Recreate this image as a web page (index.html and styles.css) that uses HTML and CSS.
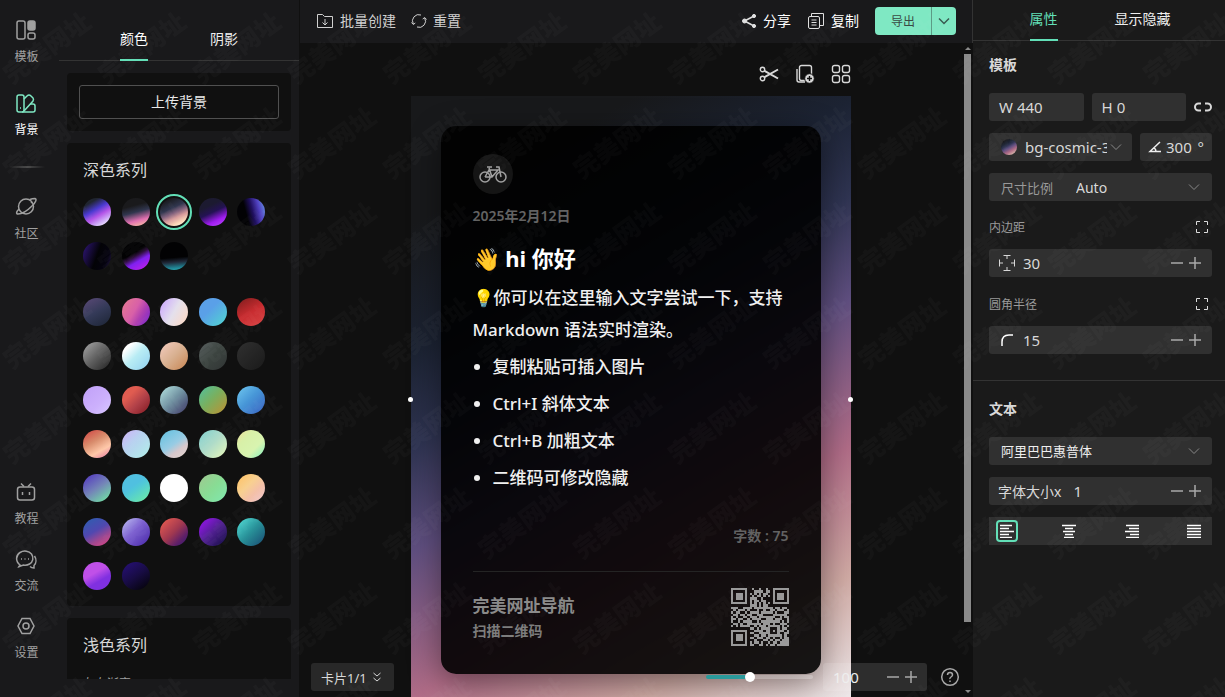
FILE: index.html
```html
<!doctype html>
<html lang="zh-CN">
<head>
	<meta charset="utf-8">
	<title>卡片编辑</title>
	<meta name="viewport" content="width=device-width, initial-scale=1">
	<link rel="stylesheet" href="styles.css">
</head>
<body>
	<div class="app">
		<nav class="nav">
			<a href="#" class="nav-item">
				<svg viewBox="0 0 24 24"><rect x="3" y="3" width="8" height="18" rx="2"/><rect x="14" y="3" width="7" height="9" rx="2" fill="currentColor"/><rect x="14" y="15" width="7" height="6" rx="2"/></svg>
				<span>模板</span>
			</a>
			<a href="#" class="nav-item active">
				<svg viewBox="0 0 24 24"><rect x="3" y="4" width="7" height="17" rx="2"/><path d="M10 8l3-3q2-2 4 0l2 2q1 1 0 3L10 20"/><path d="M16 13h3q2 0 2 2v4q0 2-2 2H8"/><path d="M6 17h1"/></svg>
				<span>背景</span>
			</a>
			<hr class="nav-line">
			<a href="#" class="nav-item">
				<svg viewBox="0 0 24 24"><circle cx="12" cy="11.500" r="7.500"/><path d="M5 14c-3 3-3 5-1 5 4 0 10-4 14-8 4-4 5-7 3-7.500-1 0-3 0-5 1"/><path d="M17 7l1 1"/></svg>
				<span>社区</span>
			</a>
			<div class="nav-bottom">
				<a href="#" class="nav-item">
					<svg viewBox="0 0 24 24"><rect x="3.500" y="7" width="17" height="13" rx="2.500"/><path d="M7 3.500l3 3M17 3.500l-3 3M8.500 12v3M15.500 12v3"/></svg>
					<span>教程</span>
				</a>
				<a href="#" class="nav-item">
					<svg viewBox="0 0 24 24"><path d="M6 18c-5-4-4-10 0-12.500 4-2.500 9-1.500 11.500 1.500 2.500 3.500 1.500 8-2 10-2 1.200-4 1.500-6 1L5 19.500z"/><path d="M20.500 9c2 3 2 7-.5 9.500v2.500c-2 0-3-.5-4-1.500"/><path d="M7 12h1M10.500 12h1M14 12h1"/></svg>
					<span>交流</span>
				</a>
				<a href="#" class="nav-item">
					<svg viewBox="0 0 24 24"><path d="M8 4.500h8l4 7.500-4 7.500H8L4 12z"/><circle cx="12" cy="12" r="3"/></svg>
					<span>设置</span>
				</a>
			</div>
		</nav>

		<aside class="side">
			<div class="tabs side-tabs">
				<button class="tab active">颜色</button>
				<button class="tab">阴影</button>
			</div>
			<div class="side-scroll">
				<section class="box upload-box">
					<button class="upload">上传背景</button>
				</section>
				<section class="box">
					<h2>深色系列</h2>
					<div class="swatches">
						<button class="sw c1" aria-label="cosmic 1"></button>
						<button class="sw c2" aria-label="cosmic 2"></button>
						<button class="sw c3 selected" aria-label="cosmic 3"></button>
						<button class="sw c4" aria-label="cosmic 4"></button>
						<button class="sw c5" aria-label="cosmic 5"></button>
						<button class="sw c6" aria-label="cosmic 6"></button>
						<button class="sw c7" aria-label="cosmic 7"></button>
						<button class="sw c8" aria-label="cosmic 8"></button>
					</div>
					<div class="swatches">
						<button class="sw g1" aria-label="渐变 1"></button>
						<button class="sw g2" aria-label="渐变 2"></button>
						<button class="sw g3" aria-label="渐变 3"></button>
						<button class="sw g4" aria-label="渐变 4"></button>
						<button class="sw g5" aria-label="渐变 5"></button>
						<button class="sw g6" aria-label="渐变 6"></button>
						<button class="sw g7" aria-label="渐变 7"></button>
						<button class="sw g8" aria-label="渐变 8"></button>
						<button class="sw g9" aria-label="渐变 9"></button>
						<button class="sw g10" aria-label="渐变 10"></button>
						<button class="sw g11" aria-label="渐变 11"></button>
						<button class="sw g12" aria-label="渐变 12"></button>
						<button class="sw g13" aria-label="渐变 13"></button>
						<button class="sw g14" aria-label="渐变 14"></button>
						<button class="sw g15" aria-label="渐变 15"></button>
						<button class="sw g16" aria-label="渐变 16"></button>
						<button class="sw g17" aria-label="渐变 17"></button>
						<button class="sw g18" aria-label="渐变 18"></button>
						<button class="sw g19" aria-label="渐变 19"></button>
						<button class="sw g20" aria-label="渐变 20"></button>
						<button class="sw g21" aria-label="渐变 21"></button>
						<button class="sw g22" aria-label="渐变 22"></button>
						<button class="sw g23" aria-label="渐变 23"></button>
						<button class="sw g24" aria-label="渐变 24"></button>
						<button class="sw g25" aria-label="渐变 25"></button>
						<button class="sw g26" aria-label="渐变 26"></button>
						<button class="sw g27" aria-label="渐变 27"></button>
						<button class="sw g28" aria-label="渐变 28"></button>
						<button class="sw g29" aria-label="渐变 29"></button>
						<button class="sw g30" aria-label="渐变 30"></button>
						<button class="sw g31" aria-label="渐变 31"></button>
						<button class="sw g32" aria-label="渐变 32"></button>
					</div>
				</section>
				<section class="box">
					<h2>浅色系列</h2>
					<p class="sub">左右渐变</p>
				</section>
			</div>
		</aside>

		<main class="main">
			<header class="topbar">
				<button class="act dim">
					<svg class="i18" viewBox="0 0 18 18"><path d="M1.500 15.500v-13h5l2 2h8v11z"/><path d="M9 7v6M6.500 10.500L9 13l2.500-2.500"/></svg>
					批量创建
				</button>
				<button class="act dim">
					<svg class="i16" viewBox="0 0 16 16"><path d="M2.300 11A6.300 6.300 0 0 1 10 2M13.700 5A6.300 6.300 0 0 1 6 14M.5 9.500l1.800 2 2-1.500M15.500 6.500l-1.800-2-2 1.500"/></svg>
					重置
				</button>
				<div class="act-right">
					<button class="act">
						<svg class="i16" viewBox="0 0 16 16"><path d="M13 3L3.500 8l9.500 5" stroke-width="1.500"/><g fill="currentColor"><circle cx="13" cy="3" r="1.600"/><circle cx="3.500" cy="8" r="2"/><circle cx="13" cy="13" r="1.600"/></g></svg>
						分享
					</button>
					<button class="act">
						<svg class="i18" viewBox="0 0 18 18"><rect x="1.500" y="4.500" width="11" height="12" rx="1.500"/><path d="M4.500 4V1.500h12v12H13M4.500 8h5M4.500 10.500h5M4.500 13h5"/></svg>
						复制
					</button>
					<div class="export">
						<button class="export-main">导出</button>
						<button class="export-more" aria-label="更多"><svg class="i12" viewBox="0 0 12 12"><path d="M1 3.500l5 5 5-5" stroke-width="1.500"/></svg></button>
					</div>
				</div>
			</header>

			<div class="canvas">
				<div class="tools">
					<button aria-label="剪切"><svg viewBox="0 0 20 20"><circle cx="3.500" cy="5.500" r="2.200"/><circle cx="3.500" cy="14.500" r="2.200"/><path d="M5.500 6.800L19 14.500M5.500 13.200L19 5.500" stroke-width="2"/></svg></button>
					<button aria-label="添加"><svg viewBox="0 0 20 20"><rect x="4.500" y="1.500" width="12" height="15" rx="2"/><path d="M2 5v11q0 2 2 2h6"/><circle cx="14.500" cy="14.500" r="4.800" fill="#d8d8d8" stroke="#101010" stroke-width="1"/><path d="M14.500 12v5M12 14.500h5" stroke="#101010"/></svg></button>
					<button aria-label="布局"><svg viewBox="0 0 20 20"><rect x="1.500" y="1.500" width="7" height="7" rx="2"/><rect x="11.500" y="1.500" width="7" height="7" rx="2"/><rect x="1.500" y="11.500" width="7" height="7" rx="2"/><rect x="11.500" y="11.500" width="7" height="7" rx="2"/></svg></button>
				</div>

				<div class="frame">
					<i class="handle handle-l"></i>
					<i class="handle handle-r"></i>
					<article class="card">
						<div class="avatar">
							<svg viewBox="0 0 28 18"><circle cx="6" cy="12" r="5"/><circle cx="22" cy="12" r="5"/><path d="M6 12l4-7h9l-6 7H6M8 2h5M10 3l3 9M17 2h3l2 10"/></svg>
						</div>
						<p class="date">2025年2月12日</p>
						<h1>👋 hi 你好</h1>
						<p class="text">💡你可以在这里输入文字尝试一下，支持 Markdown 语法实时渲染。</p>
						<ul>
							<li>复制粘贴可插入图片</li>
							<li>Ctrl+I 斜体文本</li>
							<li>Ctrl+B 加粗文本</li>
							<li>二维码可修改隐藏</li>
						</ul>
						<p class="count">字数 : 75</p>
						<footer class="card-foot">
							<div>
								<p class="site">完美网址导航</p>
								<p class="scan">扫描二维码</p>
							</div>
							<svg class="qr" viewBox="0 0 25 25" shape-rendering="crispEdges"><path id="qr-path"/></svg>
						</footer>
					</article>
				</div>

				<div class="scrollbar"><i class="up"></i><i class="thumb"></i><i class="down"></i></div>

				<button class="pages">卡片1/1 <svg class="i10" viewBox="0 0 10 10"><path d="M1.500 1L5 4l3.500-3M1.500 6L5 9l3.500-3"/></svg></button>
				<div class="zoombar">
					<input type="range" class="zoom" min="0" max="100" value="40" aria-label="缩放">
					<div class="field zoom-field">
						<input type="text" value="100" aria-label="缩放比例">
						<button class="step" aria-label="缩小"><svg viewBox="0 0 12 12"><path d="M0 6h12"/></svg></button>
						<button class="step" aria-label="放大"><svg viewBox="0 0 12 12"><path d="M0 6h12M6 0v12"/></svg></button>
					</div>
					<button class="help" aria-label="帮助"><svg viewBox="0 0 20 20"><circle cx="10" cy="10" r="8.300"/><path d="M7.500 8q0-2.500 2.500-2.500T12.500 8q0 1-1.500 2t-1 2M10 13.500v1.500"/></svg></button>
				</div>
			</div>
		</main>

		<aside class="props">
			<div class="tabs props-tabs">
				<button class="tab active">属性</button>
				<button class="tab">显示隐藏</button>
			</div>
			<section class="group">
				<h3>模板</h3>
				<div class="row">
					<label class="field size">W <input type="text" value="440"></label>
					<label class="field size">H <input type="text" value="0"></label>
					<button class="link" aria-label="锁定比例"><svg viewBox="0 0 18 10"><path d="M7 1.500H4.500a3.500 3.500 0 0 0 0 7H7M11 1.500h2.500a3.500 3.500 0 0 1 0 7H11"/></svg></button>
				</div>
				<div class="row">
					<div class="field bg-field">
						<i class="dot c3"></i>
						<select aria-label="背景"><option>bg-cosmic-3</option></select>
						<svg class="i12 chev" viewBox="0 0 12 12"><path d="M1 3.500l5 5 5-5"/></svg>
					</div>
					<div class="field angle">
						<svg viewBox="0 0 14 14"><path d="M12 2L2 11.500h11M6 8q2 1 2 3.500" stroke-width="1.500"/></svg>
						<input type="text" value="300" aria-label="角度">
						<span>°</span>
					</div>
				</div>
				<div class="field ratio">
					<label for="ratio">尺寸比例</label>
					<select id="ratio"><option>Auto</option></select>
					<svg class="i12 chev" viewBox="0 0 12 12"><path d="M1 3.500l5 5 5-5"/></svg>
				</div>
				<div class="label">
					<label for="pad">内边距</label>
					<button class="expand" aria-label="展开"><svg viewBox="0 0 12 12"><path d="M.5 4V.5H4M8 .5h3.500V4M11.500 8v3.500H8M4 11.500H.5V8"/></svg></button>
				</div>
				<div class="field stepper">
					<svg class="i18" viewBox="0 0 18 18"><path d="M5.500 1.500h7M9 2v3M5.500 16.500h7M9 16v-3M1.500 5.500v7M2 9h3M16.500 5.500v7M16 9h-3"/></svg>
					<input type="text" id="pad" value="30">
					<button class="step" aria-label="减"><svg viewBox="0 0 12 12"><path d="M0 6h12"/></svg></button>
					<button class="step" aria-label="加"><svg viewBox="0 0 12 12"><path d="M0 6h12M6 0v12"/></svg></button>
				</div>
				<div class="label">
					<label for="radius">圆角半径</label>
					<button class="expand" aria-label="展开"><svg viewBox="0 0 12 12"><path d="M.5 4V.5H4M8 .5h3.500V4M11.500 8v3.500H8M4 11.500H.5V8"/></svg></button>
				</div>
				<div class="field stepper">
					<svg class="i18" viewBox="0 0 18 18"><path d="M4 15v-4q0-7 7-7h4" stroke="#fff" stroke-width="1.500"/></svg>
					<input type="text" id="radius" value="15">
					<button class="step" aria-label="减"><svg viewBox="0 0 12 12"><path d="M0 6h12"/></svg></button>
					<button class="step" aria-label="加"><svg viewBox="0 0 12 12"><path d="M0 6h12M6 0v12"/></svg></button>
				</div>
			</section>
			<section class="group group-text">
				<h3>文本</h3>
				<div class="field font-field">
					<select aria-label="字体"><option>阿里巴巴惠普体</option></select>
					<svg class="i12 chev" viewBox="0 0 12 12"><path d="M1 3.500l5 5 5-5"/></svg>
				</div>
				<div class="field stepper">
					<label for="fs">字体大小x</label>
					<input type="text" id="fs" value="1">
					<button class="step" aria-label="减"><svg viewBox="0 0 12 12"><path d="M0 6h12"/></svg></button>
					<button class="step" aria-label="加"><svg viewBox="0 0 12 12"><path d="M0 6h12M6 0v12"/></svg></button>
				</div>
				<div class="aligns">
					<button class="active" aria-label="左对齐"><svg viewBox="0 0 14 14"><path d="M0 1.500h12M0 4.500h9M0 7.500h14M0 10.500h9M0 13.500h12"/></svg></button>
					<button aria-label="居中"><svg viewBox="0 0 14 14"><path d="M0 1.500h14M3 4.500h8M1 7.500h12M3 10.500h8M2 13.500h10"/></svg></button>
					<button aria-label="右对齐"><svg viewBox="0 0 14 14"><path d="M1 1.500h13M4 4.500h10M0 7.500h14M5 10.500h9M1 13.500h13"/></svg></button>
					<button aria-label="两端对齐"><svg viewBox="0 0 14 14"><path d="M0 1.500h14M0 4.500h14M0 7.500h14M0 10.500h14M0 13.500h14"/></svg></button>
				</div>
			</section>
		</aside>
	</div>

	<svg class="mark" aria-hidden="true">
		<defs>
			<pattern id="mark" width="95" height="95" patternUnits="userSpaceOnUse">
				<text x="47" y="57" text-anchor="middle" transform="rotate(-36 47 48)">完美网址</text>
			</pattern>
		</defs>
		<rect width="100%" height="100%" fill="url(#mark)"/>
	</svg>

	<script>
		// modules of the code, one string per row
		var rows = [
			"1111111001001001001111111",
			"1000001000111101101000001",
			"1011101010101011001011101",
			"1011101001011010101011101",
			"1011101011100100001011101",
			"1000001010110110001000001",
			"1111111010101010101111111",
			"0000000011101011000000000",
			"1110011110111111110110110",
			"0101110100010010011011101",
			"1011001011110111110100011",
			"0110110110011100001111110",
			"1010011011101111111001011",
			"1101100101111001110111001",
			"1001011110010111111110101",
			"0110100111111011101001110",
			"1010111100101110111110101",
			"0000000011010111100010110",
			"1111111000111101101011101",
			"1000001011001111100010011",
			"1011101000110110111111010",
			"1011101011011101101001011",
			"1011101000100011010110111",
			"1000001010110100101101111",
			"1111111011001101011011111"
		];
		var d = "";
		for (var y = 0; y < rows.length; y++) {
			for (var x = 0; x < rows[y].length; x++) {
				if (rows[y].charAt(x) == "1") {
					d += "M" + x + " " + y + "h1v1h-1z";
				}
			}
		}
		document.getElementById("qr-path").setAttribute("d", d);
	</script>
</body>
</html>
```
FILE: styles.css
```css
* {
	box-sizing: border-box;
	margin: 0;
	padding: 0;
}

body {
	background: #101010;
	color: #d8d8d8;
	font-family: "Noto Sans", "Noto Sans CJK SC", sans-serif;
	font-size: 14px;
	overflow: hidden;
}

button, input, select {
	font: inherit;
	color: inherit;
	background: none;
	border: 0;
	outline: 0;
}

a {
	color: inherit;
	text-decoration: none;
}

svg {
	display: block;
	flex: none;
	fill: none;
	stroke: currentColor;
}

.i10 { width: 10px; height: 10px; }
.i12 { width: 12px; height: 12px; }
.i16 { width: 16px; height: 16px; }
.i18 { width: 18px; height: 18px; }

.app {
	display: flex;
	height: 100vh;
}

/* left navigation */
.nav {
	width: 59px;
	padding: 18px 6px 36px 0;
	background: #19191b;
	display: flex;
	flex-direction: column;
	align-items: center;
	flex: none;
}

.nav-item {
	display: flex;
	flex-direction: column;
	align-items: center;
	gap: 7px;
	color: #a0a0a0;
	font-size: 12px;
	line-height: 16px;
	margin-bottom: 26px;
}

.nav-item svg {
	width: 24px;
	height: 24px;
	stroke-width: 1.5;
}

.nav-item.active { color: #fff; }
.nav-item.active svg { color: #7fe8c3; }

.nav-line {
	width: 36px;
	height: 2px;
	border: 0;
	margin: 2px 0 27px;
	background: linear-gradient(90deg, transparent, #4a4a4a, transparent);
}

.nav-bottom {
	margin-top: auto;
	display: flex;
	flex-direction: column;
	gap: 20px;
}

.nav-bottom .nav-item { margin: 0; }

/* background panel */
.side {
	width: 240px;
	background: #19191b;
	display: flex;
	flex-direction: column;
	padding-bottom: 18px;
	flex: none;
}

.tabs {
	display: flex;
	justify-content: center;
	border-bottom: 1px solid #333;
	flex: none;
}

.tab {
	line-height: 20px;
	border-bottom: 2px solid transparent;
	margin-bottom: -1px;
	color: #eee;
}

.tab.active { border-color: #62dfb7; }

.side-tabs {
	height: 61px;
	gap: 62px;
	padding-top: 18px;
}

.side-tabs .active { color: #fff; }

.side-scroll {
	flex: 1;
	min-height: 0;
	overflow: hidden;
	padding: 12px 8px 0;
}

.box {
	background: #101010;
	border-radius: 4px;
	padding: 15px 26px 16px 16px;
	margin-bottom: 12px;
}

.upload-box { padding: 12px; }

.upload {
	width: 100%;
	height: 34px;
	padding-bottom: 2px;
	border: 1px solid #505050;
	border-radius: 3px;
	color: #e8e8e8;
}

.box h2 {
	font-size: 16px;
	font-weight: 400;
	line-height: 24px;
}

.sub {
	font-size: 12px;
	line-height: 18px;
	margin-top: 18px;
	color: #a0a0a0;
}

.swatches {
	display: grid;
	grid-template-columns: repeat(5, 28px);
	justify-content: space-between;
	row-gap: 16px;
	margin-top: 16px;
}

.swatches + .swatches { margin-top: 28px; }

.sw {
	width: 28px;
	height: 28px;
	border-radius: 50%;
}

.sw.selected {
	outline: 2px solid #62dfb7;
	outline-offset: 2px;
}

.c1 { background: linear-gradient(150deg, #202530 20%, #4a3ad0 42%, #b455e8 60%, #d0b0f8 78%, #f0e8ff 90%); }
.c2 { background: linear-gradient(165deg, #1a1a1c 30%, #30364e 50%, #e070b0 75%, #ffd0a0); }
.c3 { background: linear-gradient(150deg, #18191b 15%, #1c2333 30%, #2f3452 41%, #604f80 53%, #b06c87 70%, #d0aaa4 85%, #efebed); }
.c4 { background: linear-gradient(155deg, #1c1a30 30%, #241254 50%, #a01cf0 75%, #c050ff); }
.c5 { background: linear-gradient(75deg, #020204 35%, #201060 55%, #5040c0 75%, #6aa0e8); }
.c6 { background: linear-gradient(110deg, #2c1470 5%, #030306 50%, #050310 80%, #201048); }
.c7 { background: linear-gradient(150deg, #020203 40%, #301040 50%, #8020f0 65%, #d020e8); }
.c8 { background: linear-gradient(175deg, #020203 55%, #202838 70%, #208898 90%, #30b0b0); }
.sw.c3 { background: linear-gradient(155deg, #18191b 12%, #30364e 38%, #80607c 52%, #d89c9c 66%, #fcd8b8 82%, #fff); }
.g1 { background: linear-gradient(150deg, #5c4a78, #343a58 50%, #1c2434); }
.g2 { background: linear-gradient(120deg, #e87c90, #d860a8 45%, #b040b0 65%, #7020d0); }
.g3 { background: linear-gradient(120deg, #c8a0ff, #e4e0ec 50%, #ffd8c0); }
.g4 { background: linear-gradient(135deg, #5aa0e8 40%, #50d8d0); }
.g5 { background: linear-gradient(150deg, #7c1c1c, #c82c30 50%, #d84444); }
.g6 { background: linear-gradient(135deg, #aaa, #606060 50%, #202020); }
.g7 { background: linear-gradient(135deg, #fff 20%, #b8ecf4 50%, #90d0f0); }
.g8 { background: linear-gradient(135deg, #f4ccc0, #d8b090 50%, #c88450); }
.g9 { background: linear-gradient(135deg, #555c5c, #3c4440 50%, #303434); }
.g10 { background: linear-gradient(135deg, #303030, #1a1a1a); }
.g11 { background: linear-gradient(135deg, #c0a0f8, #ccb0fc 60%, #d8c8ff); }
.g12 { background: linear-gradient(135deg, #e05c50 30%, #b04048 60%, #801820); }
.g13 { background: linear-gradient(135deg, #b8e8e4, #7090a0 50%, #383060); }
.g14 { background: linear-gradient(135deg, #50c0a0, #78b060 45%, #c09030); }
.g15 { background: linear-gradient(135deg, #70c8f0, #4898d8 45%, #3860c0); }
.g16 { background: linear-gradient(150deg, #d04040, #d88c6c 40%, #ffc8a8 70%, #e070a0); }
.g17 { background: linear-gradient(135deg, #d0b0f8, #b8d0f0 40%, #b0f0e8); }
.g18 { background: linear-gradient(145deg, #60c0e0, #98cce4 50%, #d8c8cc 70%, #e4d8d0); }
.g19 { background: linear-gradient(135deg, #80d0d0, #b0dcc8 50%, #e8f8b8); }
.g20 { background: linear-gradient(135deg, #f0e098, #d8f0a8 30%, #d8f4b0 65%, #80f0c0); }
.g21 { background: linear-gradient(145deg, #5030c0, #7484b8 50%, #70f0a0); }
.g22 { background: linear-gradient(145deg, #50c0e0 40%, #50c8d8 50%, #70f0a0); }
.g23 { background: #fff; }
.g24 { background: linear-gradient(135deg, #a0c890, #88dc94 50%, #80e8b0); }
.g25 { background: linear-gradient(135deg, #ffc060, #f8d090 40%, #f4c0a8 65%, #f0c8d0); }
.g26 { background: linear-gradient(150deg, #2a60b0, #5048b0 45%, #a04890 70%, #e04080); }
.g27 { background: linear-gradient(135deg, #a8a0e8 15%, #7c60d0 45%, #4828a8); }
.g28 { background: linear-gradient(135deg, #f06050, #a03850 50%, #602068 75%, #301870); }
.g29 { background: linear-gradient(135deg, #8018d0 20%, #502090 50%, #100c40); }
.g30 { background: linear-gradient(135deg, #50e0d8, #289098 50%, #184870); }
.g31 { background: linear-gradient(150deg, #c050e8 40%, #8030e0 65%); }
.g32 { background: linear-gradient(145deg, #28107c, #180c44 50%, #040308 95%); }

/* top bar */
.main {
	flex: 1;
	min-width: 0;
	display: flex;
	flex-direction: column;
	border-left: 1px solid #101010;
}

.topbar {
	height: 43px;
	padding: 0 16px 1px;
	background: #19191b;
	border-right: 1px solid #333;
	display: flex;
	align-items: center;
	gap: 15px;
	flex: none;
}

.act {
	display: flex;
	align-items: center;
	gap: 6px;
	color: #fff;
	line-height: 20px;
}

.act.dim { color: #d0d0d0; }
.act-right svg { color: #e0e0e0; }

.act-right {
	margin-left: auto;
	display: flex;
	align-items: center;
	gap: 16px;
}

.export {
	display: flex;
	height: 28px;
	border-radius: 4px;
	background: #7fe8c3;
	color: #3a4a44;
}

.export-main {
	width: 56px;
	font-size: 12px;
}

.export-more {
	width: 25px;
	border-left: 1px solid #5a9a84;
	display: grid;
	place-items: center;
}

.export-more svg { color: #3a5a50; }

/* canvas */
.canvas {
	flex: 1;
	min-height: 0;
	position: relative;
	overflow: hidden;
	background: #101010;
	padding: 20px 12px 0 0;
}

.tools {
	width: 440px;
	height: 22px;
	margin: 0 auto 11px;
	display: flex;
	justify-content: flex-end;
	align-items: center;
	gap: 16px;
	color: #d8d8d8;
}

.tools svg {
	width: 20px;
	height: 20px;
	stroke-width: 1.4;
}

.frame {
	position: relative;
	width: 440px;
	margin: 0 auto;
	padding: 30px;
	background: linear-gradient(150deg, #18191b 15%, #1c2333 30%, #2f3452 41%, #604f80 53%, #b06c87 70%, #d0aaa4 85%, #efebed);
}

.handle {
	position: absolute;
	top: 50%;
	width: 5px;
	height: 5px;
	margin-top: -3px;
	border-radius: 50%;
	background: #fff;
}

.handle-l { left: -3px; }
.handle-r { right: -2px; }

.card {
	background: rgba(0, 0, 0, .9);
	border-radius: 15px;
	padding: 28px 32px;
	color: #f0f0f0;
	box-shadow: 0 8px 32px rgba(0, 0, 0, .45);
}

.avatar {
	width: 40px;
	height: 40px;
	border-radius: 50%;
	background: #151515;
	color: #a0a0a0;
	display: grid;
	place-items: center;
}

.avatar svg {
	width: 28px;
	height: 18px;
	stroke-width: 1.5;
}

.date, .count, .scan {
	font-size: 14px;
	line-height: 20px;
	font-weight: 600;
	color: #626262;
}

.date { margin-top: 12px; }

.card h1 {
	font-size: 22px;
	line-height: 32px;
	margin-top: 16px;
	color: #fff;
}

.text {
	margin-top: 8px;
	font-size: 17px;
	font-weight: 500;
	line-height: 32px;
}

.card ul {
	display: flex;
	flex-direction: column;
	gap: 5px;
	margin-top: 5px;
	padding-left: 20px;
	font-size: 17px;
	font-weight: 500;
	line-height: 32px;
}

.count {
	margin-top: 32px;
	text-align: right;
}

.card-foot {
	display: flex;
	justify-content: space-between;
	align-items: center;
	margin-top: 25px;
	padding-top: 16px;
	border-top: 1px solid #242424;
}

.site {
	font-size: 17px;
	font-weight: 700;
	line-height: 24px;
	margin-bottom: 3px;
	color: #8a8a8a;
}

.scan { color: #7c7c7c; }

.qr {
	width: 58px;
	height: 58px;
	fill: #999;
	stroke: none;
}

.scrollbar {
	position: absolute;
	top: 0;
	right: 1px;
	bottom: 0;
	width: 9px;
	padding: 4px 0;
	display: flex;
	flex-direction: column;
	align-items: center;
}

.thumb {
	width: 7px;
	height: 88%;
	margin: 4px 0 auto;
	background: #8a8a8a;
}

.up, .down {
	border: 3px solid transparent;
	border-top: 0;
	border-bottom-color: #8a8a8a;
}

.down { transform: rotate(180deg); }

.pages {
	position: absolute;
	left: 11px;
	bottom: 6px;
	height: 28px;
	padding: 0 12px 0 10px;
	display: flex;
	align-items: center;
	gap: 5px;
	background: #282828;
	border-radius: 3px;
	font-size: 13px;
}

.zoombar {
	position: absolute;
	right: 13px;
	bottom: 6px;
	display: flex;
	align-items: center;
}

.zoom {
	appearance: none;
	width: 107px;
	height: 10px;
	margin-right: 10px;
}

.zoom::-webkit-slider-runnable-track {
	height: 4px;
	border-radius: 2px;
	background: linear-gradient(90deg, #2a9a9b 40%, rgba(255, 255, 255, .25) 40%);
}

.zoom::-webkit-slider-thumb {
	appearance: none;
	width: 10px;
	height: 10px;
	margin-top: -3px;
	border-radius: 50%;
	background: #fff;
}

/* form fields */
.field {
	display: flex;
	align-items: center;
	height: 28px;
	padding: 0 10px;
	background: #303030;
	border-radius: 3px;
	font-size: 15px;
}

.field input, .field select {
	flex: 1;
	width: 0;
	min-width: 0;
	appearance: none;
}

.field select option { background: #303030; }

.step {
	width: 12px;
	margin-left: 6px;
	color: #a8a8a8;
}

.step svg {
	width: 12px;
	height: 12px;
	stroke-width: 1.5;
}

.zoom-field {
	width: 104px;
	background: rgba(255, 255, 255, .12);
	color: #eee;
}

.help {
	margin-left: 13px;
	color: #a8a8a8;
}

.help svg {
	width: 20px;
	height: 20px;
	stroke-width: 1.5;
}

/* properties */
.props {
	width: 252px;
	background: #1a1a1a;
	flex: none;
}

.props-tabs {
	height: 41px;
	gap: 57px;
	padding-left: 2px;
}

.props-tabs .tab { padding-bottom: 2px; }
.props-tabs .active { color: #62dfb7; }

.group {
	display: flex;
	flex-direction: column;
	gap: 12px;
	padding: 14px 13px 26px 16px;
}

.group-text {
	border-top: 1px solid #333;
	padding-top: 18px;
}

.group h3 {
	font-size: 14px;
	line-height: 20px;
	margin-bottom: 6px;
}

.row {
	display: flex;
	align-items: center;
	gap: 8px;
}

.size {
	flex: 1;
	gap: 4px;
}

.link svg {
	width: 18px;
	height: 10px;
	stroke-width: 2;
}

.bg-field {
	flex: 1;
	padding-left: 12px;
}

.bg-field select { margin: 0 3px 0 8px; }

.dot {
	width: 16px;
	height: 16px;
	border-radius: 50%;
}

.angle {
	width: 72px;
	padding: 0 8px;
	gap: 4px;
}

.angle svg {
	width: 14px;
	height: 14px;
	stroke: #eee;
}

.chev { color: #888; }

.ratio {
	padding: 0 12px;
	font-size: 14px;
}

.ratio label {
	font-size: 13px;
	color: #999;
	margin-right: 23px;
}

.label {
	display: flex;
	justify-content: space-between;
	align-items: center;
	height: 24px;
	padding: 4px 4px 0 0;
	font-size: 12px;
	color: #999;
}

.expand svg {
	width: 12px;
	height: 12px;
	color: #ddd;
}

.stepper { padding: 0 11px 0 9px; }
.stepper > svg { margin-right: 7px; }
.stepper + .label { margin-top: 1px; }

.stepper label {
	font-size: 14px;
	margin-right: 12px;
}

.font-field {
	padding: 0 12px;
	font-size: 13px;
	color: #eee;
}

.aligns {
	display: flex;
	justify-content: space-between;
	align-items: center;
	height: 28px;
	padding: 0 7px;
	background: #303030;
	color: #fff;
}

.aligns button {
	width: 22px;
	height: 22px;
	border-radius: 4px;
	display: grid;
	place-items: center;
}

.aligns .active { box-shadow: inset 0 0 0 2px #62dfb7; }

.aligns svg {
	width: 14px;
	height: 14px;
	stroke-width: 1.6;
}

/* watermark */
.mark {
	position: fixed;
	inset: 0;
	width: 100%;
	height: 100%;
	stroke: none;
	pointer-events: none;
}

.mark text {
	fill: rgba(255, 255, 255, .025);
	font-size: 25px;
	font-weight: 900;
}
```
